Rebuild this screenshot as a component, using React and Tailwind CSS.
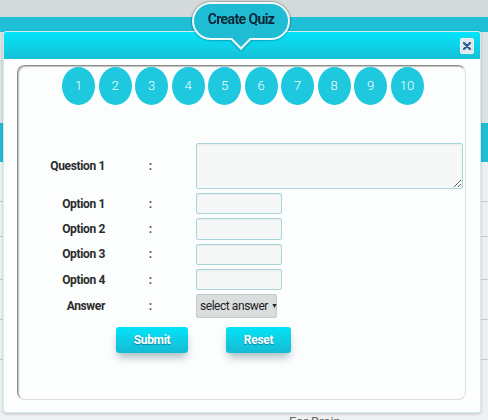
import React from 'react';

const nums = [1, 2, 3, 4, 5, 6, 7, 8, 9, 10];
const options = ['Option 1', 'Option 2', 'Option 3', 'Option 4'];

function Row({ label, children, h = 'h-[21.3px]' }) {
  return (
    <div className={`flex items-center ${h}`}>
      <div className="w-[87px] text-right text-[12px] font-bold tracking-[-0.35px] text-[#2b2b2b]">{label}</div>
      <div className="w-[91px] text-center text-[12px] font-bold text-[#555]">:</div>
      {children}
    </div>
  );
}

export default function App() {
  return (
    <div className="relative w-[488px] h-[420px] overflow-hidden bg-[#eef1f1] font-['Roboto',sans-serif]">
      {/* page behind the dialog */}
      <div className="h-[17px] bg-[#d4d9da]" />
      <div className="h-[15px] bg-[#1fbfd5]" />
      <div className="h-[91px] bg-[#dde2e3]" />
      <div className="h-[39px] bg-[#21bdd4]" />
      <div className="h-[40px] border-b border-[#c9cfd0]" />
      <div className="h-[35px] border-b border-[#c9cfd0]" />
      <div className="h-[43px] border-b border-[#c9cfd0]" />
      <div className="h-[40px] border-b border-[#c9cfd0]" />
      <div className="h-[40px] border-b border-[#c9cfd0]" />
      <div className="h-[55px]" />
      <div className="pl-[289px] text-[13px] leading-none text-[#666]">For Brain</div>

      {/* dialog */}
      <div className="absolute left-[3px] top-[31px] w-[478px] h-[382px] rounded-[3px] border border-[#d3ecf0] bg-[#fcfdfd] shadow-[0_1px_3px_rgba(0,0,0,0.2)]">
        <div className="h-[27px] rounded-t-[2px] bg-gradient-to-b from-[#00e4f9] to-[#15c1d8] flex items-center justify-end pr-[6px]">
          <button className="w-[14px] h-[16px] rounded-[2px] border border-[#f2f6fa] bg-[#dfe7f0] flex items-center justify-center">
            <svg width="8" height="8" viewBox="0 0 8 8">
              <path d="M1 1L7 7M7 1L1 7" stroke="#2c5b8c" strokeWidth="2.2" strokeLinecap="round" />
            </svg>
          </button>
        </div>

        <div className="pl-[13px] pt-[6px]">
          <div className="w-[449px] h-[335px] rounded-[8px] border border-[#dedede] border-t-[#8e8e8e] border-l-[#8e8e8e] shadow-[inset_1px_1px_1px_rgba(0,0,0,0.25)]">
            <div className="flex gap-[3.5px] pl-[44px] pt-[1px]">
              {nums.map((n) => (
                <div key={n} className="w-[33px] h-[38px] rounded-[50%] bg-[#1ec8de] flex items-center justify-center text-white text-[13px] font-light">
                  {n}
                </div>
              ))}
            </div>

            <div className="mt-[38px] flex flex-col gap-[4px]">
              <Row label="Question 1" h="h-[46px]">
                <textarea className="w-[267px] h-[46px] border border-[#a9d6db] bg-[#f6f7f7] rounded-[2px] shadow-[inset_0_1px_2px_rgba(0,0,0,0.06)] outline-none" />
              </Row>
              {options.map((o) => (
                <Row key={o} label={o}>
                  <input className="w-[86px] h-[21.3px] border border-[#a9d6db] bg-[#f6f7f7] rounded-[2px] shadow-[inset_0_1px_2px_rgba(0,0,0,0.06)] outline-none" />
                </Row>
              ))}
              <Row label="Answer" h="h-[24px]">
                <div className="w-[81px] h-[24px] rounded-[2px] border border-[#c4caca] bg-[#d9dddd] flex items-center pl-[3px] gap-[3px] whitespace-nowrap text-[12px] tracking-[-0.45px] text-[#222]">
                  <span>select answer</span>
                  <span className="text-[7px]">▼</span>
                </div>
              </Row>
            </div>

            <div className="flex gap-[38px] pl-[98px] mt-[9px]">
              <button className="w-[72px] h-[26px] rounded-[3px] bg-gradient-to-b from-[#00e3f8] to-[#14bbd3] text-white text-[12px] font-bold tracking-[-0.3px] [text-shadow:0_1px_1px_rgba(0,60,80,0.5)] shadow-[0_6px_8px_-2px_rgba(0,60,80,0.35)]">
                Submit
              </button>
              <button className="w-[65px] h-[26px] rounded-[3px] bg-gradient-to-b from-[#00e3f8] to-[#14bbd3] text-white text-[12px] font-bold tracking-[-0.3px] [text-shadow:0_1px_1px_rgba(0,60,80,0.5)] shadow-[0_6px_8px_-2px_rgba(0,60,80,0.35)]">
                Reset
              </button>
            </div>
          </div>
        </div>
      </div>

      {/* title bubble */}
      <div className="absolute left-[192px] top-[2px] drop-shadow-[0_0_1px_rgba(0,0,0,0.55)]">
        <div className="relative w-[98px] h-[38px] rounded-[19px] border-2 border-[#eefbfd] bg-[#1fbdd4] flex items-center justify-center">
          <div className="absolute left-[40px] top-[28.5px] w-[14px] h-[14px] rotate-45 bg-[#1fbdd4] border-r-2 border-b-2 border-[#eefbfd]" />
          <span className="relative -mt-[3px] text-[14px] font-bold tracking-[-0.6px] text-[#0c2535]">Create Quiz</span>
        </div>
      </div>
    </div>
  );
}
